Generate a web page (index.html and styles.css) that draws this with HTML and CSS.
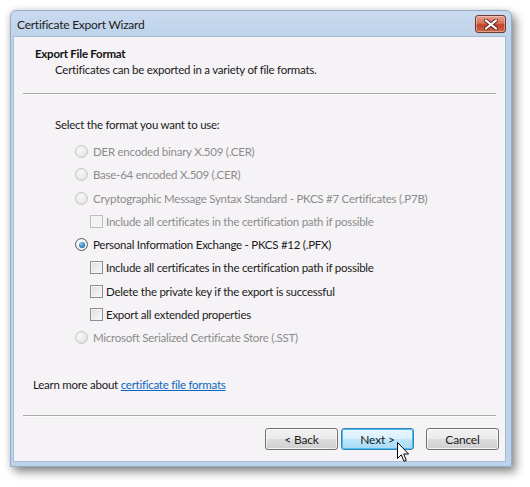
FILE: index.html
```html
<!DOCTYPE html>
<html>
<head>
<meta charset="utf-8">
<link rel="stylesheet" href="styles.css">
</head>
<body>
<div class="window">
  <div class="titlebar">
    <span class="title">Certificate Export Wizard</span>
    <button class="close" aria-label="Close">
      <svg width="16" height="11" viewBox="0 0 16 11">
        <path d="M3 1.5 L13 9.5 M13 1.5 L3 9.5" stroke="#5a2a20" stroke-width="4" stroke-linecap="round"/>
        <path d="M3 1.5 L13 9.5 M13 1.5 L3 9.5" stroke="#ffffff" stroke-width="2.2" stroke-linecap="round"/>
      </svg>
    </button>
  </div>
  <div class="client">
    <div class="header">
      <div class="h-title">Export File Format</div>
      <div class="h-sub">Certificates can be exported in a variety of file formats.</div>
    </div>
    <div class="sep"></div>
    <div class="body">
      <div class="prompt">Select the format you want to use:</div>
      <div class="options">
        <div class="row disabled"><span class="radio"></span>DER encoded binary X.509 (.CER)</div>
        <div class="row disabled"><span class="radio"></span>Base-64 encoded X.509 (.CER)</div>
        <div class="row disabled"><span class="radio"></span>Cryptographic Message Syntax Standard - PKCS #7 Certificates (.P7B)</div>
        <div class="row sub disabled"><span class="check"></span>Include all certificates in the certification path if possible</div>
        <div class="row"><span class="radio on"></span>Personal Information Exchange - PKCS #12 (.PFX)</div>
        <div class="row sub"><span class="check"></span>Include all certificates in the certification path if possible</div>
        <div class="row sub"><span class="check"></span>Delete the private key if the export is successful</div>
        <div class="row sub"><span class="check"></span>Export all extended properties</div>
        <div class="row disabled"><span class="radio"></span>Microsoft Serialized Certificate Store (.SST)</div>
      </div>
      <div class="learn">Learn more about <a href="#">certificate file formats</a></div>
    </div>
    <div class="sep"></div>
    <div class="buttons">
      <button class="btn">&lt; Back</button>
      <button class="btn focus">Next &gt;</button>
      <button class="btn cancel">Cancel</button>
    </div>
  </div>
  <svg class="cursor" width="13" height="21" viewBox="0 0 13 21">
    <path d="M0.5 0.5 L0.5 16.5 L4.3 12.8 L7 19.3 L9.3 18.3 L6.7 12 L11.6 12 Z" fill="#ffffff" stroke="#000000" stroke-width="1" stroke-linejoin="miter"/>
  </svg>
</div>
</body>
</html>
```
FILE: styles.css
```css
html, body {
  margin: 0;
  padding: 0;
  background: #ffffff;
}
body {
  width: 530px;
  height: 487px;
  overflow: hidden;
  font-family: Lato, "Noto Sans", sans-serif;
  font-size: 11.5px;
  letter-spacing: -0.25px;
  color: #1a1a1a;
}
.window {
  position: relative;
  margin: 10px 0 0 10px;
  width: 502px;
  height: 457px;
  box-sizing: border-box;
  border: 1px solid #93acc9;
  border-radius: 6px 6px 0 0;
  background: linear-gradient(#c9daee 0px, #bdd2ea 26px, #bed3eb 100%);
  box-shadow: 4px 5px 10px rgba(0,0,0,0.45), -1px 0 6px rgba(0,0,0,0.12);
  display: flex;
  flex-direction: column;
}
.titlebar {
  height: 25px;
  display: flex;
  align-items: center;
  justify-content: space-between;
  padding: 0 5px 0 6px;
}
.title {
  font-size: 12px;
  color: #1c1c1c;
  margin-top: 1px;
}
.close {
  width: 31px;
  height: 18px;
  margin-top: 1px;
  padding: 0;
  border: 1px solid #6e3a32;
  border-radius: 3px;
  background: linear-gradient(#e8a18e 0%, #d7725a 45%, #c2402a 55%, #cf6a4e 100%);
  box-shadow: inset 0 0 0 1px rgba(255,255,255,0.35);
  display: flex;
  align-items: center;
  justify-content: center;
}
.client {
  flex: 1;
  margin: 0 5px 4px 2px;
  background: #f6f3f6;
  border: 1px solid #a7bcd6;
  display: flex;
  flex-direction: column;
}
.header {
  padding: 9px 0 0 21px;
  height: 56px;
  box-sizing: border-box;
}
.h-title {
  font-weight: bold;
  line-height: 16px;
  color: #111;
}
.h-sub {
  padding-left: 20px;
  line-height: 16px;
}
.sep {
  margin: 0 9px 0 9px;
  height: 1px;
  background: #a9a9a9;
  border-bottom: 1px solid #ffffff;
}
.body {
  flex: 1;
  padding: 22px 0 0 41px;
  display: flex;
  flex-direction: column;
}
.prompt {
  line-height: 16px;
}
.options {
  margin-top: 7px;
  padding-left: 20px;
  display: flex;
  flex-direction: column;
}
.row {
  height: 23.25px;
  display: flex;
  align-items: center;
}
.row.sub {
  padding-left: 15px;
}
.disabled {
  color: #8b8b8b;
}
.radio {
  width: 13px;
  height: 13px;
  box-sizing: border-box;
  border-radius: 50%;
  border: 1px solid #c4c4c4;
  background: radial-gradient(circle at 40% 35%, #f8f8f8, #dedede);
  margin-right: 5px;
  flex: none;
  position: relative;
}
.radio.on {
  border-color: #5a5a5a;
  background: radial-gradient(circle at 40% 35%, #ffffff, #e2e2e2);
}
.radio.on::after {
  content: "";
  position: absolute;
  left: 2.5px;
  top: 2.5px;
  width: 6px;
  height: 6px;
  border-radius: 50%;
  background: radial-gradient(circle at 40% 35%, #8fd0f2, #1a6fb4 70%, #0e4d87);
}
.check {
  width: 13px;
  height: 13px;
  box-sizing: border-box;
  border: 1px solid #8e8f8f;
  background: linear-gradient(135deg, #dcdcdc, #fbfbfb);
  box-shadow: inset 0 0 0 1px #f4f4f4;
  margin-right: 3px;
  flex: none;
}
.disabled .check {
  border-color: #bdbdbd;
  background: #f4f4f4;
}
.learn {
  margin-top: 28px;
  margin-left: -22px;
  line-height: 16px;
}
.learn a {
  color: #0d66c2;
  text-decoration: underline;
}
.buttons {
  height: 44px;
  display: flex;
  align-items: center;
  padding-left: 251px;
  gap: 3px;
}
.btn {
  width: 73px;
  height: 22px;
  padding: 0;
  font-family: inherit;
  font-size: 12px;
  letter-spacing: -0.2px;
  color: #1a1a1a;
  border: 1px solid #707070;
  border-radius: 3px;
  background: linear-gradient(#f2f2f2 0%, #ebebeb 48%, #dddddd 52%, #cfcfcf 100%);
  box-shadow: inset 0 0 0 1px rgba(255,255,255,0.7);
}
.btn.focus {
  border-color: #3c7fb1;
  background: linear-gradient(#eaf6fd 0%, #d9f0fc 48%, #bee6fd 52%, #a7d9f5 100%);
  box-shadow: inset 0 0 0 1px #48c0f2;
}
.btn.cancel {
  margin-left: 9px;
}
.cursor {
  position: absolute;
  left: 386px;
  top: 431px;
}
```
